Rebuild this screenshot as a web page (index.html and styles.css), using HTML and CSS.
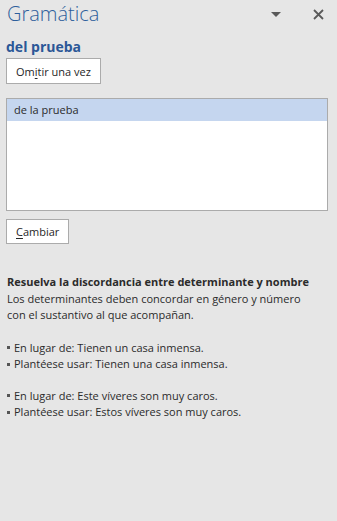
FILE: index.html
```html
<!DOCTYPE html>
<html lang="es">
<head>
<meta charset="utf-8">
<link rel="stylesheet" href="styles.css">
</head>
<body>
<div class="pane">
  <div class="header">
    <div class="title">Gramática</div>
    <div class="tools">
      <svg class="menu" width="10" height="5" viewBox="0 0 10 5"><path d="M0 0H10L5 5Z" fill="#595959"/></svg>
      <svg class="close" width="11" height="11" viewBox="0 0 11 11"><path d="M1 1L10 10M10 1L1 10" stroke="#595959" stroke-width="1.8" fill="none"/></svg>
    </div>
  </div>
  <div class="error">del prueba</div>
  <button class="btn">Om<u>i</u>tir una vez</button>
  <div class="list">
    <div class="item selected">de la prueba</div>
  </div>
  <button class="btn"><u>C</u>ambiar</button>
  <div class="explain">
    <div class="heading">Resuelva la discordancia entre determinante y nombre</div>
    <p>Los determinantes deben concordar en género y número con el sustantivo al que acompañan.</p>
    <ul>
      <li>En lugar de: Tienen un casa inmensa.</li>
      <li>Plantéese usar: Tienen una casa inmensa.</li>
    </ul>
    <ul>
      <li>En lugar de: Este víveres son muy caros.</li>
      <li>Plantéese usar: Estos víveres son muy caros.</li>
    </ul>
  </div>
</div>
</body>
</html>
```
FILE: styles.css
```css
html, body {
  margin: 0;
  padding: 0;
  background: #e6e6e6;
}
body {
  width: 337px;
  height: 521px;
  font-family: "Open Sans", "Noto Sans", sans-serif;
  font-size: 11px;
  color: #2b2b2b;
}
.pane {
  padding: 0 9px 0 6px;
  display: flex;
  flex-direction: column;
  align-items: flex-start;
}
.header {
  align-self: stretch;
  display: flex;
  justify-content: space-between;
  align-items: center;
  height: 28px;
}
.title {
  font-size: 20px;
  font-weight: 300;
  color: #2e5f9c;
  padding-left: 1px;
  line-height: 30px;
}
.tools {
  display: flex;
  align-items: center;
  gap: 32px;
  padding-right: 4px;
}
.error {
  margin-top: 9px;
  font-size: 14px;
  font-weight: 700;
  color: #2b5797;
  line-height: 20px;
}
.btn {
  font-family: inherit;
  font-size: 11px;
  color: #262626;
  background: #ffffff;
  border: 1px solid #ababab;
  height: 26px;
  padding: 0 9px;
  margin: 1px 0 0 0;
}
.btn u {
  text-decoration-thickness: 1px;
  text-underline-offset: 2px;
}
.list {
  align-self: stretch;
  margin-top: 14px;
  height: 111px;
  background: #ffffff;
  border: 1px solid #ababab;
}
.item {
  height: 22px;
  line-height: 22px;
  padding-left: 7px;
}
.selected {
  background: #c5d6ef;
}
.list + .btn {
  margin-top: 8px;
  height: 25px;
}
.explain {
  margin-top: 30px;
  padding-left: 1px;
  max-width: 305px;
  line-height: 16.5px;
}
.heading {
  font-weight: 700;
  white-space: nowrap;
}
.explain p {
  margin: 0 0 16px 0;
}
.explain ul {
  list-style: none;
  margin: 0 0 15px 0;
  padding: 0;
}
.explain li::before {
  content: "";
  display: inline-block;
  width: 3px;
  height: 3px;
  background: #555;
  margin: 0 4px 2px 0;
  vertical-align: middle;
}
```
